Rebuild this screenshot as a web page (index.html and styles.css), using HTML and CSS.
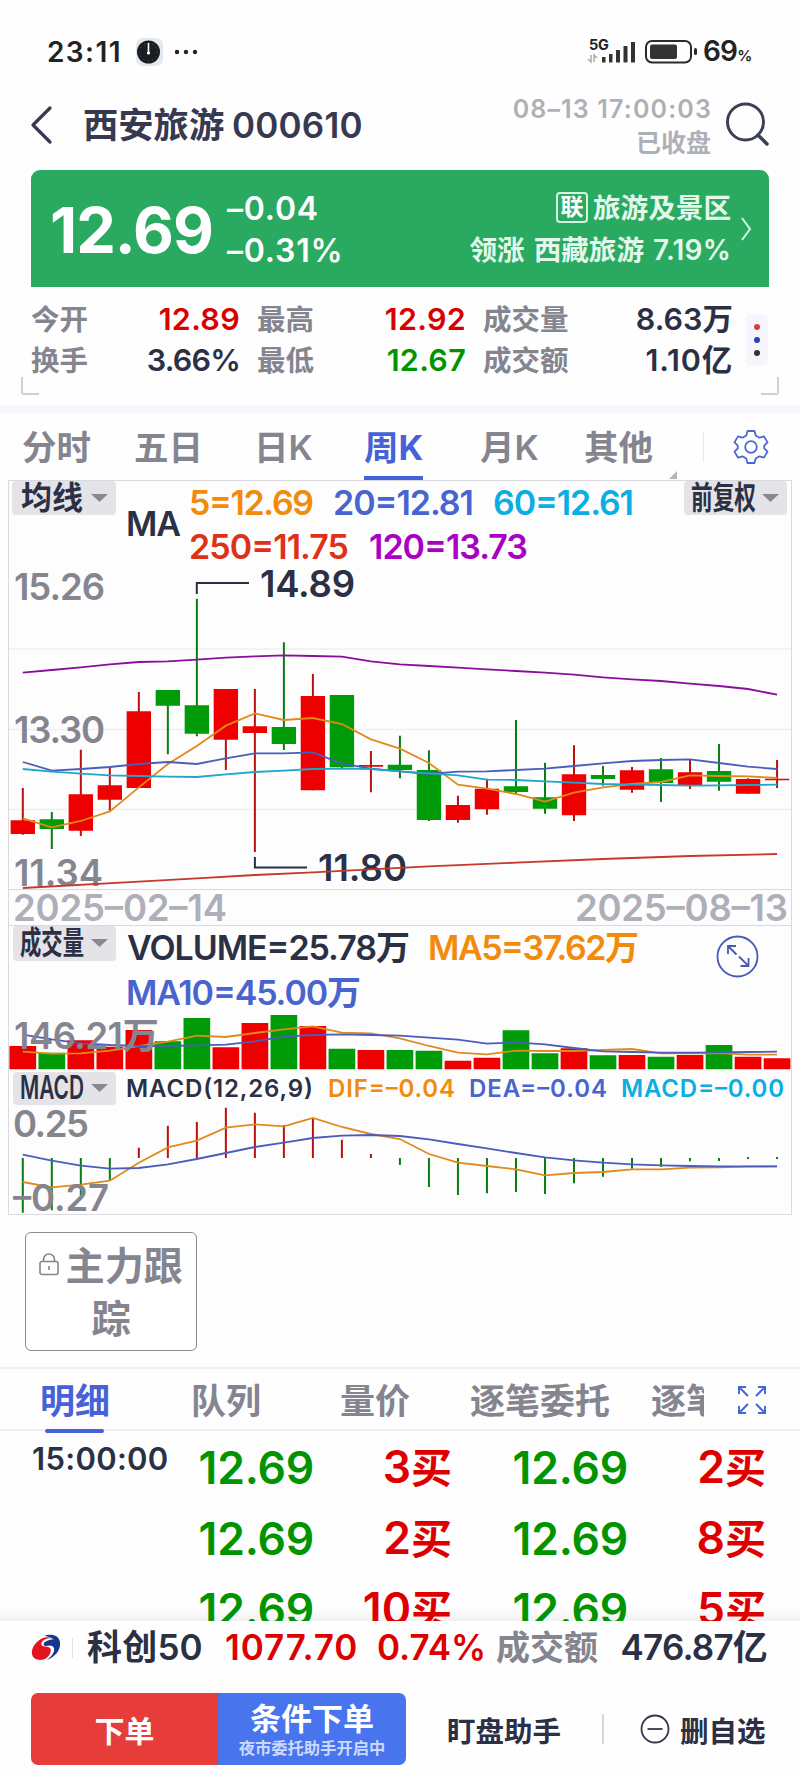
FILE: index.html
```html
<!DOCTYPE html>
<html lang="zh-CN">
<head>
<meta charset="utf-8">
<title>西安旅游 000610</title>
<link rel="stylesheet" href="styles.css">
</head>
<body>
<div class="status">
  <span class="clock">23:11</span>
  <svg class="clock-icon" width="28" height="30" viewBox="0 0 28 30"><rect x="0" y="1" width="27" height="28" rx="7" fill="#e3e9f0"/><circle cx="12.5" cy="15" r="11.5" fill="#1c1d20"/><circle cx="12.5" cy="15" r="8.7" fill="none" stroke="#55585c" stroke-dasharray="1 3.5"/><path d="M12.5 6v11" stroke="#fff" stroke-width="1.6"/><circle cx="12.5" cy="16" r="1.6" fill="#fff"/></svg>
  <svg class="dots" width="24" height="6" viewBox="0 0 24 6" fill="#222"><circle cx="3" cy="3" r="2.2"/><circle cx="12" cy="3" r="2.2"/><circle cx="21" cy="3" r="2.2"/></svg>
  <svg class="signal" width="160" height="32" viewBox="586 36 160 32"><text class="g5" x="590" y="50" textLength="20">5G</text><g fill="#333"><rect x="603" y="57" width="3.5" height="5.5"/><rect x="610" y="54" width="3.5" height="8.5"/><rect x="617" y="50" width="4" height="12.5"/><rect x="624.500" y="46" width="4" height="16.500"/><rect x="632" y="42" width="4" height="20.500"/></g><path d="M589 59l3 3V55M595 62v-7l3 3" fill="none" stroke="#aaa" stroke-width="1.500"/><rect x="647" y="41" width="45" height="21.500" rx="6" fill="none" stroke="#2a2a2a" stroke-width="2"/><rect x="651" y="44.500" width="27" height="14.500" rx="2" fill="#333"/><rect x="695" y="48" width="3" height="7" rx="1.500" fill="#2a2a2a"/></svg>
  <span class="percent">69<small>%</small></span>
</div>

<header class="head">
  <svg class="back" width="24" height="40" viewBox="0 0 24 40"><path d="M20 3L3 20l17 17" fill="none" stroke="#363950" stroke-width="3.2" stroke-linecap="round" stroke-linejoin="round"/></svg>
  <h1 class="name">西安旅游</h1><span class="code">000610</span>
  <div class="when"><span class="time">08–13 17:00:03</span><span class="closed">已收盘</span></div>
  <svg class="search" width="48" height="48" viewBox="0 0 48 48" fill="none" stroke="#3c4055" stroke-width="3"><circle cx="21.500" cy="22" r="18"/><path d="M34 35l9 9" stroke-linecap="round" stroke-width="3.500"/></svg>
</header>

<section class="quote">
  <span class="last">12.69</span>
  <div class="change"><span>–0.04</span><span>–0.31%</span></div>
  <div class="sector">
    <div class="sector-line"><span class="tag">联</span>旅游及景区</div>
    <div class="sector-line lead">领涨<i></i>西藏旅游<i></i><b>7.19%</b></div>
  </div>
  <svg class="go" width="14" height="26" viewBox="0 0 14 26"><path d="M3 2l8 11-8 11" fill="none" stroke="#d8f5e4" stroke-width="2"/></svg>
</section>

<section class="stats">
  <dl class="grid">
    <dt>今开</dt><dd class="up">12.89</dd><dt>最高</dt><dd class="up">12.92</dd><dt>成交量</dt><dd>8.63万</dd>
    <dt>换手</dt><dd class="rate">3.66%</dd><dt>最低</dt><dd class="down">12.67</dd><dt>成交额</dt><dd class="sum">1.10亿</dd>
  </dl>
  <div class="more"><i class="dot red"></i><i class="dot blue"></i><i class="dot dark"></i></div>
  <i class="corner left"></i><i class="corner right"></i>
</section>

<nav class="periods">
  <span>分时</span><span>五日</span><span>日K</span><span class="on">周K</span><span>月K</span><span class="other">其他</span>
  <i class="bar"></i>
  <svg class="gear" width="36" height="36" viewBox="-18 -18 36 36" fill="none" stroke="#4a68d4" stroke-width="1.800" stroke-linejoin="round"><path d="M-3.500-16h7l1.200 4.500 3.800 2.200 4.500-1.300 3.500 6-3.300 3.300v2.600l3.300 3.300-3.500 6-4.500-1.300-3.800 2.200L3.500 16h-7l-1.200-4.500-3.800-2.200-4.500 1.300-3.500-6 3.300-3.300v-2.600l-3.300-3.300 3.500-6 4.500 1.300 3.800-2.200z"/><circle r="5.800"/></svg>
</nav>

<svg class="chart" width="800" height="736" viewBox="0 480 800 736">
  <g class="frame"><rect x="8.500" y="480.500" width="783" height="734"/><path d="M8 889.500H792M8 925.500H792"/><path class="faint" d="M9 649H791M9 729.500H791M9 809.500H791"/></g>
  <g class="axis">
    <text x="14" y="600" textLength="91">15.26</text><text x="14" y="743" textLength="91">13.30</text><text x="14" y="886" textLength="89">11.34</text>
  </g>
  <g class="date"><text x="13" y="921" textLength="214">2025–02–14</text><text x="575" y="921" textLength="213">2025–08–13</text></g>
  <g class="note"><text x="260" y="597" textLength="95">14.89</text><text x="318" y="881" textLength="89">11.80</text><path d="M196.800 594V583H249M254.900 857V867.500H307"/></g>

  <g transform="translate(22.800 560) scale(29.010 .33333)">
    <path class="wick r" d="M0 684V824M2 569V828M3 622V752M4 396V684M7 387V630M8 387V876M10 342V691M12 573V697M15 707V788M16 656V764M19 556V783M21 621V698M23 598V687M25 655V701M26 600V684"/>
    <path class="wick g" d="M1 756V867M5 390V583M6 116V529M9 247V570M11 405V626M13 527V655M14 571V783M17 480V702M18 608V761M20 618V677M22 594V726M24 552V692"/>
    <path class="body r" d="M-.42 781h.84V822h-.84zM1.580 703h.84V812h-.84zM2.580 676h.84V719h-.84zM3.580 454h.84V684h-.84zM6.580 387h.84V539h-.84zM7.580 499h.84V519h-.84zM9.580 408h.84V691h-.84zM11.580 615h.84V620h-.84zM14.580 735h.84V780h-.84zM15.580 686h.84V748h-.84zM18.580 643h.84V766h-.84zM20.580 631h.84V689h-.84zM22.580 637h.84V678h-.84zM24.580 657h.84V701h-.84zM25.580 656h.84V661h-.84z"/>
    <path class="body g" d="M.58 778h.84V807h-.84zM4.580 390h.84V437h-.84zM5.580 436h.84V521h-.84zM8.580 501h.84V552h-.84zM10.580 405h.84V622h-.84zM12.580 614h.84V630h-.84zM13.580 630h.84V780h-.84zM16.580 679h.84V696h-.84zM17.580 712h.84V746h-.84zM19.580 645h.84V657h-.84zM21.580 628h.84V669h-.84zM23.580 633h.84V665h-.84z"/>
    <polyline class="line orange" points="0,775 1,802 2,783 3,754 4,682 5,612 6,558 7,497 8,460 9,480 10,474 11,492 12,538 13,566 14,609 15,674 16,686 17,702 18,725 19,698 20,682 21,672 22,666 23,646 24,648 25,649 26,654"/>
    <polyline class="line blue" points="0,606 1,632 2,627 3,621 4,612 5,606 6,612 7,595 8,580 9,580 10,577 11,611 12,626 13,634 14,642 15,635 16,634 17,630 18,626 19,618 20,610 21,603 22,600 23,598 24,609 25,620 26,627"/>
    <polyline class="line cyan" points="0,627 1,635 2,641 3,646 4,648 5,650 6,651 7,643 8,636 9,632 10,627 11,626 12,627 13,634 14,640 15,646 16,659 17,660 18,664 19,668 20,672 21,674 22,675 23,677 24,676 25,675 26,674"/>
    <polyline class="line purple" points="0,338 1,330 2,322 3,313 4,306 5,304 6,299 7,293 8,289 9,286 10,288 11,290 12,304 13,313 14,318 15,323 16,328 17,333 18,338 19,344 20,352 21,358 22,363 23,371 24,378 25,387 26,404"/>
    <polyline class="line brick" points="0,984 4,965 6,955 8,945 10,937 12,928 14,919 17,908 20,897 23,888 26,882"/>
  </g>

  <g transform="translate(22.800 900) scale(29.010 .33333)">
    <path class="body r" d="M-.46 438h.92V508h-.92zM1.540 421h.92V508h-.92zM2.540 440h.92V508h-.92zM3.540 390h.92V508h-.92zM6.540 442h.92V508h-.92zM7.540 369h.92V508h-.92zM9.540 378h.92V508h-.92zM11.540 450h.92V508h-.92zM14.540 482h.92V508h-.92zM15.540 473h.92V508h-.92zM18.540 445h.92V508h-.92zM20.540 465h.92V508h-.92zM22.540 465h.92V508h-.92zM24.540 470h.92V508h-.92zM25.540 475h.92V508h-.92z"/>
    <path class="body g" d="M.54 458h.92V508h-.92zM4.540 424h.92V508h-.92zM5.540 354h.92V508h-.92zM8.540 345h.92V508h-.92zM10.540 446h.92V508h-.92zM12.540 450h.92V508h-.92zM13.540 452h.92V508h-.92zM16.540 391h.92V508h-.92zM17.540 460h.92V508h-.92zM19.540 466h.92V508h-.92zM21.540 470h.92V508h-.92zM23.540 435h.92V508h-.92z"/>
    <polyline class="line orange" points="0,455 1,461 2,460 3,452 4,438 5,425 6,407 7,411 8,399 9,388 10,379 11,398 12,400 13,415 14,438 15,458 16,463 17,452 18,453 19,453 20,450 21,447 22,460 23,460 24,459 25,464 26,464"/>
    <polyline class="line blue" points="0,404 1,418 2,430 3,435 4,438 5,438 6,436 7,434 8,424 9,410 10,405 11,403 12,405 13,407 14,413 15,419 16,431 17,427 18,433 19,444 20,454 21,456 22,458 23,458 24,457 25,456 26,455"/>
    <path class="wick g" d="M0 774V938M1 774V931M2 774V885M3 774V842M13 774V795M14 774V861M15 774V885M16 774V880M17 774V876M18 774V882M19 774V850M20 774V830M21 774V806M22 774V800M23 774V784M24 774V783M25 771V777M26 771V777"/>
    <path class="wick r" d="M4 743V774M5 677V774M6 666V774M7 623V774M8 638V774M9 675V774M10 655V774M11 719V774M12 762V774"/>
    <polyline class="line orange" points="0,846 1,862 2,854 3,842 4,788 5,742 6,722 7,683 8,673 9,679 10,654 11,681 12,702 13,717 14,762 15,788 16,798 17,808 18,826 19,819 20,816 21,808 22,808 23,803 24,802 25,800 26,799"/>
    <polyline class="line blue" points="0,764 1,782 2,797 3,806 4,804 5,793 6,777 7,759 8,741 9,728 10,714 11,707 12,705 13,708 14,718 15,732 16,745 17,759 18,772 19,781 20,788 21,793 22,796 23,798 24,799 25,799 26,799"/>
  </g>

  <g class="axis"><text x="14" y="1049" textLength="145">146.21万</text><text x="13" y="1137" textLength="76">0.25</text><text x="13" y="1211" textLength="96">–0.27</text></g>

  <g class="select">
    <rect x="12" y="481" width="104" height="34" rx="4"/><rect x="684" y="481" width="103" height="34" rx="4"/><rect x="13" y="926" width="103" height="35" rx="4"/><rect x="13" y="1072" width="103" height="33" rx="4"/>
    <path d="M91 494h17l-8.500 8zM762 494h17l-8.500 8zM91 939h17l-8.500 8zM91 1084h17l-8.500 8z"/>
    <text x="21" y="509" textLength="62" lengthAdjust="spacingAndGlyphs">均线</text><text x="691" y="509" textLength="65" lengthAdjust="spacingAndGlyphs">前复权</text><text x="20" y="954" textLength="64" lengthAdjust="spacingAndGlyphs">成交量</text><text class="latin" x="20" y="1099" textLength="64" lengthAdjust="spacingAndGlyphs">MACD</text>
  </g>

  <g class="legend">
    <text class="dark" x="126" y="536" textLength="55">MA</text>
    <text class="orange" x="189" y="515" textLength="125">5=12.69</text><text class="blue" x="333" y="515" textLength="141">20=12.81</text><text class="cyan" x="493" y="515" textLength="141">60=12.61</text>
    <text class="brick" x="189" y="559" textLength="160">250=11.75</text><text class="purple" x="369" y="559" textLength="159">120=13.73</text>
    <text class="dark" x="127" y="960" textLength="283">VOLUME=25.78万</text><text class="orange" x="428" y="960" textLength="211">MA5=37.62万</text><text class="blue" x="126" y="1005" textLength="235">MA10=45.00万</text>
  </g>
  <g class="legend small">
    <text class="dark" x="126" y="1097" textLength="187">MACD(12,26,9)</text><text class="orange" x="328" y="1097" textLength="127">DIF=–0.04</text><text class="blue" x="469" y="1097" textLength="138">DEA=–0.04</text><text class="cyan" x="621" y="1097" textLength="163">MACD=–0.00</text>
  </g>
  <g class="resize"><circle cx="737.500" cy="956.500" r="20"/><path d="M728 954v-8h8M728 946l8.500 8.500M748.500 958v8h-8M748.500 966l-9.500-9.500"/></g>
</svg>

<div class="track">
  <button class="track-btn"><svg width="20" height="23" viewBox="0 0 20 23" fill="none" stroke="#858590" stroke-width="1.600"><rect x="1" y="8.500" width="18" height="13" rx="2"/><path d="M4.500 8.500V6.500a5.500 5.500 0 0 1 11 0v2M10 13v4"/></svg><span>主力跟</span><span class="wrap">踪</span></button>
</div>

<nav class="detail-tabs">
  <span class="on">明细</span><span>队列</span><span>量价</span><span>逐笔委托</span><span class="cut">逐笔</span>
  <svg width="30" height="30" viewBox="0 0 30 30" fill="none" stroke="#4a68d4" stroke-width="2"><path d="M2 9V2h7M2 2l9 9M21 2h7v7M28 2l-9 9M2 21v7h7M2 28l9-9M21 28h7v-7M28 28l-9-9"/></svg>
</nav>

<section class="ticks">
  <div class="tick"><span class="at">15:00:00</span><span class="px">12.69</span><span class="qty">3<b>买</b></span><span class="px">12.69</span><span class="qty">2<b>买</b></span></div>
  <div class="tick"><span class="at"></span><span class="px">12.69</span><span class="qty">2<b>买</b></span><span class="px">12.69</span><span class="qty">8<b>买</b></span></div>
  <div class="tick"><span class="at"></span><span class="px">12.69</span><span class="qty">10<b>买</b></span><span class="px">12.69</span><span class="qty">5<b>买</b></span></div>
</section>

<section class="index">
  <svg width="30" height="30" viewBox="0 0 30 30"><path d="M13 3C20 0 28 2 29 9c1 8-5 15-13 18 5-4 8-8 7-12-1-3-5-3-8-2-3 0-3-3-1-4 3-2 7-3 9-2-3-3-7-4-10-4z" fill="#15358f"/><path d="M12 5C5 8 0 15 1 21c1 6 8 7 13 5 5-3 7-8 5-11-2-2-5-1-7-2-3-1-2-5 3-7 2-1 4-1 6 0-2-2-6-2-9-1z" fill="#e3141e"/></svg>
  <i class="split"></i>
  <span class="iname">科创50</span><span class="ival">1077.70</span><span class="ipct">0.74%</span><span class="ilab">成交额</span><span class="iamt">476.87亿</span>
</section>

<footer class="actions">
  <button class="order">下单</button>
  <button class="cond"><span>条件下单</span><small>夜市委托助手开启中</small></button>
  <span class="helper">盯盘助手</span>
  <i class="sep"></i>
  <svg width="30" height="30" viewBox="0 0 30 30" fill="none" stroke="#33384a" stroke-width="1.800"><circle cx="15" cy="15" r="13.500"/><path d="M7.500 15h15"/></svg>
  <span class="remove">删自选</span>
</footer>
</body>
</html>
```
FILE: styles.css
```css
* { box-sizing: border-box; }
body {
  margin: 0;
  width: 800px;
  height: 1778px;
  overflow: hidden;
  background: #fefeff;
  color: #2b3045;
  font-family: Inter, "Noto Sans CJK SC", sans-serif;
  font-weight: 600;
}
button { font: inherit; border: 0; padding: 0; margin: 0; }
i, b, small { font-style: normal; font-weight: inherit; }
svg { flex: none; display: block; }
span, h1 { white-space: nowrap; }

.status { display: flex; align-items: center; height: 72px; padding: 32px 0 0 47px; color: #222; }
.clock { width: 89px; font-size: 28px; line-height: 40px; letter-spacing: 1.4px; }
.clock-icon { margin-right: 10px; }
.signal { margin-left: 387px; margin-right: -42px; }
.g5 { font-size: 14.5px; font-weight: 700; fill: #222; }
.percent { padding-top: 3px; font-size: 28px; line-height: 40px; letter-spacing: -.8px; }
.percent small { font-size: 15px; }

.head { display: flex; align-items: center; height: 98px; padding: 6px 0 0 30px; }
.back { margin: 2px 29px 0 0; }
.name { margin: 0; padding-top: 3px; width: 149px; font-size: 35.3px; line-height: 50px; font-weight: 600; color: #363950; }
.code { padding-top: 2px; width: 160px; font-size: 35px; line-height: 50px; letter-spacing: .2px; color: #363950; }
.when { display: flex; flex-direction: column; align-items: flex-end; width: 319px; padding-top: 3px; color: #aeb0b8; }
.time { font-size: 25px; line-height: 34px; letter-spacing: 1.15px; margin-right: -1px; }
.closed { font-size: 25px; line-height: 34px; }
.search { margin: 2px 0 2px 13px; }

.quote { display: flex; align-items: center; width: 738px; height: 117px; margin-left: 31px; padding-left: 19px; border-radius: 9px 9px 0 0; background: #2aaa61; color: #fff; }
.last { width: 177px; padding-top: 2px; font-size: 63px; line-height: 80px; font-weight: 700; letter-spacing: -1px; }
.change { display: flex; flex-direction: column; width: 150px; padding-top: 2px; font-size: 32px; line-height: 42px; letter-spacing: .8px; }
.sector { flex: 1; display: flex; flex-direction: column; align-items: flex-end; }
.sector-line { display: flex; align-items: center; height: 42px; font-size: 27.6px; line-height: 42px; color: #e3f8eb; }
.sector-line i { width: 9px; }
.sector-line b { font-size: 28px; letter-spacing: .2px; }
.tag { width: 32px; height: 31px; margin-right: 5px; border: 2px solid #d5f3e0; border-radius: 4px; font-size: 23px; line-height: 26px; text-align: center; color: #fff; }
.go { margin: 0 16px 0 8px; }

.stats { position: relative; display: flex; align-items: center; height: 126px; padding: 0 0 18px 31px; border-bottom: 8px solid #f6f6fd; }
.grid { display: grid; grid-template-columns: 57px 152px 74px 152px 103px 164px; grid-auto-rows: 41px; margin: 6px 0 0; }
.grid dt { font-size: 28.5px; line-height: 42px; color: #85858f; }
.grid dd { margin: 0; font-size: 30.5px; line-height: 39px; text-align: right; }
.grid .up, .grid .down { letter-spacing: .3px; }
.grid .rate { letter-spacing: -.8px; }
.grid .sum { letter-spacing: .8px; }
.grid dt:nth-of-type(3n+2), .grid dt:nth-of-type(3n) { padding-left: 17px; }
.up { color: #d90000; }
.down { color: #009500; }
.more { display: flex; flex-direction: column; justify-content: center; align-items: center; gap: 7px; width: 22px; height: 52px; margin: 5px 0 0 13px; border-radius: 5px; background: #f6f6fc; }
.dot { width: 6px; height: 6px; border-radius: 50%; }
.red { background: #d4403c; }
.dot.blue { background: #2a43b8; }
.dot.dark { background: #30333d; }
.corner { position: absolute; top: 90px; width: 18px; height: 18px; border-bottom: 2px solid #d0d0d3; }
.corner.left { left: 21px; border-left: 2px solid #d0d0d3; border-radius: 0 0 0 3px; }
.corner.right { right: 21px; border-right: 2px solid #d0d0d3; border-radius: 0 0 3px 0; }

.periods { display: grid; grid-template-columns: 112px 120px 110px 116px 104px 119px 30px 36px; height: 67px; padding-left: 22px; font-size: 34.5px; line-height: 69px; color: #85858f; }
.periods .on { width: 59px; height: 67px; border-bottom: 4px solid #4562d8; color: #4562d8; font-weight: 700; }
.other { position: relative; }
.other::after { content: ""; position: absolute; right: 26px; bottom: 3px; border: 4px solid; border-color: transparent #b5b5b5 #b5b5b5 transparent; }
.bar { width: 1px; height: 30px; margin-top: 19px; background: #e7e7ec; }
.gear { margin-top: 16px; }

.chart { font-weight: 600; }
.frame rect { fill: #fefdfe; stroke: #dadade; }
.frame path { stroke: #d9dade; }
.frame .faint { stroke: #f0f0f2; stroke-width: 1.5; }
.axis, .date, .note { font-size: 36.5px; }
.axis { fill: #85858f; }
.date { fill: #adb0b9; }
.note { fill: #2b3045; }
.note path { fill: none; stroke: #2b3045; stroke-width: 2; }
.wick { fill: none; stroke-width: 2; vector-effect: non-scaling-stroke; }
.wick.r { stroke: #bb1010; }
.wick.g { stroke: #087d12; }
.body.r { fill: #ee0000; }
.body.g { fill: #009b08; }
.line { fill: none; stroke-width: 1.8; vector-effect: non-scaling-stroke; }
.line.orange { stroke: #e18a1b; }
.line.blue { stroke: #4a5dbb; }
.line.cyan { stroke: #20a6cc; }
.line.purple { stroke: #8a0e9c; }
.line.brick { stroke: #c8372b; }
.select rect { fill: #e4e3e8; }
.select path { fill: #888892; }
.select text { font-size: 32px; fill: #2b3045; }
.legend { font-size: 34px; }
.small { font-size: 24px; }
.legend .dark { fill: #2b3045; }
.legend .orange { fill: #f28a0a; }
.legend .blue { fill: #4864cf; }
.legend .cyan { fill: #0aaee2; }
.legend .brick { fill: #de3218; }
.legend .purple { fill: #a800c4; }
.resize { fill: none; stroke: #4658b5; stroke-width: 1.8; }

.track { height: 151px; padding: 16px 0 0 25px; }
.track-btn { display: grid; grid-template-columns: 20px 118px; column-gap: 7px; grid-template-rows: 53px 53px; align-items: center; justify-content: center; align-content: center; width: 172px; height: 119px; border: 1.5px solid #8a8a90; border-radius: 6px; background: #fff; color: #85858f; font-size: 39.2px; line-height: 55px; text-align: left; }
.track-btn svg { margin-top: -2px; }
.track-btn .wrap { grid-column: 1 / -1; text-align: center; }

.detail-tabs { display: grid; grid-template-columns: 151px 149px 130px 181px 53px 33px 30px; height: 64px; padding-left: 40px; border-top: 2px solid #f0f0f2; border-bottom: 2px solid #f0f0f2; font-size: 35px; line-height: 64px; color: #85858f; }
.detail-tabs .on { position: relative; color: #4562d8; font-weight: 700; }
.detail-tabs .on::after { content: ""; position: absolute; left: 5px; bottom: 0; width: 59px; height: 4px; border-radius: 2px; background: #4562d8; }
.cut { overflow: hidden; }
.detail-tabs svg { grid-column: 7; margin-top: 16px; }

.ticks { height: 190px; overflow: hidden; background: linear-gradient(#fefeff 176px, #f1f1f3 190px); }
.tick { display: grid; grid-template-columns: 166px 116px 138px 176px 138px; align-items: center; height: 71px; padding-left: 32px; line-height: 73px; }
.at { align-self: start; font-size: 31px; line-height: 56px; letter-spacing: .3px; }
.px { font-size: 44.5px; color: #009500; text-align: right; letter-spacing: -.2px; }
.qty { font-size: 44.5px; color: #de0000; text-align: right; }
.qty b { font-size: 41px; }

.index { display: grid; grid-template-columns: 41px 15px 138px 152px 119px 100px 171px; align-items: center; height: 53px; padding-left: 31px; font-size: 35px; line-height: 53px; background: #fefeff; }
.split { width: 1px; height: 20px; background: #e2e2e8; }
.iname { letter-spacing: .2px; }
.ival, .ipct { color: #dd0000; }
.ival { letter-spacing: .9px; }
.ilab { color: #85858f; font-size: 34px; }
.iamt { text-align: right; letter-spacing: -.8px; }

.actions { display: flex; align-items: center; height: 72px; margin: 19px 0 0 31px; font-size: 28.5px; }
.order, .cond { display: flex; flex-direction: column; justify-content: center; align-items: center; height: 72px; color: #fff; font-weight: 700; }
.order { width: 187px; border-radius: 7px 0 0 7px; background: #e63c3a; font-size: 30px; }
.cond { width: 188px; border-radius: 0 7px 7px 0; background: #4875ee; font-size: 31px; line-height: 37px; }
.cond small { font-size: 16.3px; line-height: 22px; font-weight: 600; color: #ccd9ff; }
.helper { margin-left: 41px; }
.sep { width: 2px; height: 30px; margin: 0 36px 0 41px; background: #d6d7dc; }
.remove { margin-left: 10px; }
```
